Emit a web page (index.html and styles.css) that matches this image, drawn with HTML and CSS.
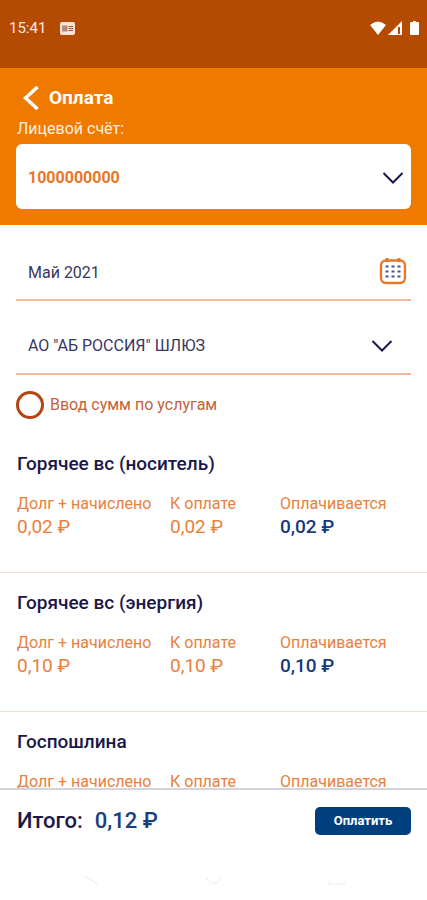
FILE: index.html
```html
<!DOCTYPE html>
<html lang="ru">
<head>
<meta charset="utf-8">
<meta name="viewport" content="width=device-width, initial-scale=1">
<title>Оплата</title>
<link rel="stylesheet" href="styles.css">
</head>
<body>
<div class="status">
  <time class="status-time">15:41</time>
  <svg class="status-note" width="15" height="13" viewBox="0 0 15 13" aria-hidden="true"><rect width="15" height="13" rx="2" fill="#fbe3d8"/><path d="M2 3.500h5.500v6H2z" fill="#b98a78"/><path d="M8.500 4.500H13M8.500 6.500H13M8.500 8.500H13" stroke="#a8502c"/></svg>
  <svg class="status-signals" width="49" height="15" viewBox="0 0 49 15" aria-hidden="true"><path d="M0 4Q8-3 16 4L8 14z" fill="#fff"/><path d="M32 0V14H18z" fill="#fff"/><path d="M29 6v7" stroke="#b54b00" stroke-width="2"/><path d="M41 1h2V0h3v1h2a1 1 0 0 1 1 1v11a1 1 0 0 1-1 1h-7a1 1 0 0 1-1-1V2a1 1 0 0 1 1-1z" fill="#fff"/></svg>
</div>
<header class="header">
  <div class="title-row">
    <a class="back" href="#" aria-label="Назад"><svg width="16" height="24" viewBox="0 0 16 24"><path d="M14.500 1L2.500 12L14.500 23" fill="none" stroke="#fff" stroke-width="3.500"/></svg></a>
    <h1 class="title">Оплата</h1>
  </div>
  <label class="account-label" for="account">Лицевой счёт:</label>
  <div class="account">
    <select class="account-select" id="account"><option>1000000000</option></select>
    <svg class="chevron" width="22" height="14" viewBox="0 0 22 14" aria-hidden="true"><path d="M1.500 2L11 11.500L20.500 2"/></svg>
  </div>
</header>
<main class="content">
  <div class="field">
    <input class="field-input" type="text" value="Май 2021" aria-label="Период" readonly>
    <button class="calendar" type="button" aria-label="Выбрать период"><svg width="28" height="28" viewBox="0 0 28 28"><rect x="2" y="3.500" width="24" height="22.500" rx="5" fill="none" stroke="#e6772a" stroke-width="2.400"/><path d="M8 1v4M20 1v4" stroke="#e6772a" stroke-width="3"/><path d="M6.500 9.500h16M6.500 14.500h16M6.500 19.500h16" stroke="#41588c" stroke-width="2" stroke-dasharray="3 3"/></svg></button>
  </div>
  <div class="field">
    <select class="field-input" aria-label="Получатель"><option>АО "АБ РОССИЯ" ШЛЮЗ</option></select>
    <svg class="chevron chevron-inset" width="22" height="14" viewBox="0 0 22 14" aria-hidden="true"><path d="M1.500 2L11 11.500L20.500 2"/></svg>
  </div>
  <label class="mode"><input class="mode-radio" type="radio" name="mode">Ввод сумм по услугам</label>
  <section class="service">
    <h2 class="service-name">Горячее вс (носитель)</h2>
    <dl class="sums">
      <div><dt>Долг + начислено</dt><dd>0,02 ₽</dd></div>
      <div><dt>К оплате</dt><dd>0,02 ₽</dd></div>
      <div><dt>Оплачивается</dt><dd class="paid">0,02 ₽</dd></div>
    </dl>
  </section>
  <section class="service">
    <h2 class="service-name">Горячее вс (энергия)</h2>
    <dl class="sums">
      <div><dt>Долг + начислено</dt><dd>0,10 ₽</dd></div>
      <div><dt>К оплате</dt><dd>0,10 ₽</dd></div>
      <div><dt>Оплачивается</dt><dd class="paid">0,10 ₽</dd></div>
    </dl>
  </section>
  <section class="service">
    <h2 class="service-name">Госпошлина</h2>
    <dl class="sums">
      <div><dt>Долг + начислено</dt></div>
      <div><dt>К оплате</dt></div>
      <div><dt>Оплачивается</dt></div>
    </dl>
  </section>
</main>
<footer class="total">
  <span class="total-label">Итого:</span>
  <span class="total-sum">0,12 ₽</span>
  <button class="pay" type="button">Оплатить</button>
</footer>
<div class="nav">
  <svg width="18" height="10" viewBox="0 0 18 10" aria-hidden="true"><path d="M3 1l14 8"/></svg>
  <svg width="18" height="10" viewBox="0 0 18 10" aria-hidden="true"><path d="M2 3q1 5 7 5t7-5"/></svg>
  <svg width="18" height="10" viewBox="0 0 18 10" aria-hidden="true"><path d="M1 6v3h16V6"/></svg>
</div>
</body>
</html>
```
FILE: styles.css
```css
* { box-sizing: border-box; }
body {
  margin: 0;
  height: 100vh;
  display: flex;
  flex-direction: column;
  background: #fff;
  color: #1b1848;
  font-family: Roboto, "Noto Sans", sans-serif;
  font-size: 16px;
  line-height: 20px;
}
h1, h2, dl, dd { margin: 0; }
button, input, select { font: inherit; color: inherit; }

.status {
  flex: none;
  display: flex;
  align-items: center;
  gap: 14px;
  height: 68px;
  padding: 0 8px 12px 9px;
  background: #b54b00;
  color: #fbe9e0;
}
.status-time { font-size: 15px; }
.status-signals { margin-left: auto; }

.header {
  flex: none;
  padding: 16px;
  background: #f07a00;
  color: #fff;
}
.title-row {
  display: flex;
  align-items: center;
  gap: 10px;
  height: 28px;
  padding-left: 7px;
}
.back { display: flex; }
.title {
  font-size: 19px;
  line-height: 24px;
  font-weight: 700;
}
.account-label {
  display: block;
  padding: 7px 1px 5px;
  color: #fff0df;
}
.account { position: relative; }
.account-select {
  display: block;
  width: 100%;
  height: 65px;
  padding: 2px 48px 0 12px;
  border: 0;
  border-radius: 6px;
  appearance: none;
  background: #fff;
  color: #e6772a;
  font-weight: 700;
}
.chevron {
  position: absolute;
  right: 7px;
  top: 2px;
  bottom: 0;
  margin: auto 0;
  fill: none;
  stroke: #1b1848;
  stroke-width: 2;
  pointer-events: none;
}
.chevron-inset { right: 18px; }

.content {
  flex: 1;
  min-height: 0;
  overflow: hidden;
  padding-top: 18px;
}
.field {
  position: relative;
  display: flex;
  align-items: center;
  height: 58px;
  margin: 0 16px 16px;
  border-bottom: 2px solid #f2b79d;
}
.field-input {
  flex: 1;
  min-width: 0;
  height: 100%;
  padding: 2px 12px 0;
  border: 0;
  appearance: none;
  background: transparent;
  color: #38365f;
}
.calendar {
  display: flex;
  margin-right: 4px;
  padding: 0;
  border: 0;
  background: none;
}
.mode {
  display: flex;
  align-items: center;
  gap: 6px;
  margin: 0 16px;
  color: #c4623a;
}
.mode-radio {
  width: 28px;
  height: 28px;
  margin: 0;
  border: 3px solid #b54414;
  border-radius: 50%;
  appearance: none;
}
.service {
  height: 139px;
  padding: 18px 16px 0 17px;
  border-bottom: 1px solid #fbd9c3;
}
.mode + .service { margin-top: 15px; }
.service-name {
  font-size: 19px;
  line-height: 24px;
  font-weight: 500;
}
.sums {
  display: grid;
  grid-template-columns: 153fr 110fr 131fr;
  margin-top: 18px;
  color: #e9803c;
}
.sums dd {
  font-size: 19px;
  line-height: 26px;
}
.sums .paid {
  color: #173a78;
  font-weight: 500;
}

.total {
  flex: none;
  display: flex;
  align-items: center;
  height: 64px;
  padding: 0 16px 0 17px;
  border-top: 2px solid #d3d3d8;
  font-size: 22px;
  line-height: 28px;
  font-weight: 500;
}
.total-sum {
  margin-left: 12px;
  color: #173f7c;
}
.pay {
  width: 96px;
  height: 28px;
  margin-left: auto;
  padding: 0;
  border: 0;
  border-radius: 5px;
  background: #003f7d;
  color: #fff;
  font-size: 13px;
  line-height: 20px;
  font-weight: 700;
}
.nav {
  flex: none;
  display: flex;
  justify-content: space-between;
  align-items: center;
  height: 48px;
  padding: 8px 81px 0;
  fill: none;
  stroke: #ececec;
}
```
